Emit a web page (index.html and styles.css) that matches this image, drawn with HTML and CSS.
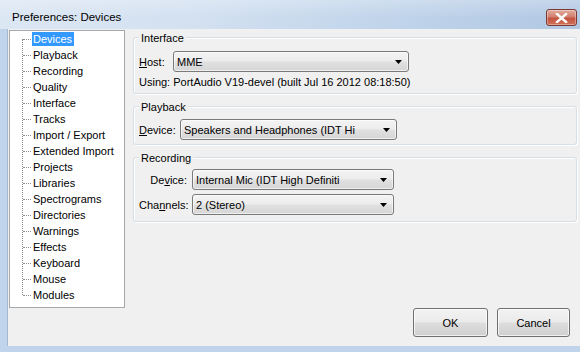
FILE: index.html
```html
<!DOCTYPE html>
<html>
<head>
<meta charset="utf-8">
<link rel="stylesheet" href="styles.css">
</head>
<body>
<div class="window">
  <div class="titlebar">
    <span class="title">Preferences: Devices</span>
    <button class="close" aria-label="Close">
      <svg width="13" height="10" viewBox="0 0 13 10"><path d="M2 1 L11 9 M11 1 L2 9" stroke="#fff" stroke-width="2.4" stroke-linecap="square"/></svg>
    </button>
  </div>
  <div class="client">
    <div class="main">
      <div class="tree">
        <ul class="tree-list">
          <li><span class="sel">Devices</span></li>
          <li><span>Playback</span></li>
          <li><span>Recording</span></li>
          <li><span>Quality</span></li>
          <li><span>Interface</span></li>
          <li><span>Tracks</span></li>
          <li><span>Import / Export</span></li>
          <li><span>Extended Import</span></li>
          <li><span>Projects</span></li>
          <li><span>Libraries</span></li>
          <li><span>Spectrograms</span></li>
          <li><span>Directories</span></li>
          <li><span>Warnings</span></li>
          <li><span>Effects</span></li>
          <li><span>Keyboard</span></li>
          <li><span>Mouse</span></li>
          <li><span>Modules</span></li>
        </ul>
      </div>
      <div class="groups">
        <div class="group g-interface">
          <div class="group-label">Interface</div>
          <div class="row">
            <span class="lbl lbl-host"><u>H</u>ost:</span>
            <div class="combo combo-host"><span>MME</span><svg class="arrow" width="7" height="4" viewBox="0 0 7 4"><polygon points="0,0 7,0 3.5,4" fill="#000"/></svg></div>
          </div>
          <div class="using">Using: PortAudio V19-devel (built Jul 16 2012 08:18:50)</div>
        </div>
        <div class="group g-playback">
          <div class="group-label">Playback</div>
          <div class="row">
            <span class="lbl lbl-pdev"><u>D</u>evice:</span>
            <div class="combo combo-pdev"><span>Speakers and Headphones (IDT Hi</span><svg class="arrow" width="7" height="4" viewBox="0 0 7 4"><polygon points="0,0 7,0 3.5,4" fill="#000"/></svg></div>
          </div>
        </div>
        <div class="group g-recording">
          <div class="group-label">Recording</div>
          <div class="row">
            <span class="lbl lbl-rec">De<u>v</u>ice:</span>
            <div class="combo combo-rec"><span>Internal Mic (IDT High Definiti</span><svg class="arrow" width="7" height="4" viewBox="0 0 7 4"><polygon points="0,0 7,0 3.5,4" fill="#000"/></svg></div>
          </div>
          <div class="row row-2">
            <span class="lbl lbl-rec">Cha<u>n</u>nels:</span>
            <div class="combo combo-rec"><span>2 (Stereo)</span><svg class="arrow" width="7" height="4" viewBox="0 0 7 4"><polygon points="0,0 7,0 3.5,4" fill="#000"/></svg></div>
          </div>
        </div>
      </div>
    </div>
    <div class="buttons">
      <button class="btn btn-ok">OK</button>
      <button class="btn btn-cancel">Cancel</button>
    </div>
  </div>
</div>
</body>
</html>
```
FILE: styles.css
```css
* { box-sizing: border-box; }
html, body { margin: 0; padding: 0; }
body {
  width: 580px;
  height: 352px;
  overflow: hidden;
  background: #c0d4eb;
  font-family: "Liberation Sans", Arial, sans-serif;
  font-size: 11px;
  color: #000;
}
.window {
  width: 580px;
  height: 352px;
  display: flex;
  flex-direction: column;
}
.titlebar {
  height: 29px;
  display: flex;
  align-items: flex-start;
  padding-left: 12px;
  background:
    linear-gradient(to bottom, rgba(255,255,255,0.25), rgba(255,255,255,0) 60%),
    linear-gradient(to right, #dce7f4 0%, #d2e0f0 35%, #bfd3ea 70%, #b1c8e3 100%);
}
.title {
  font-size: 11.5px;
  line-height: 14px;
  margin-top: 10px;
  color: #000;
}
.close {
  margin-left: auto;
  margin-right: 3px;
  margin-top: 9px;
  width: 31px;
  height: 17px;
  padding: 0;
  border: 1px solid #7a3a32;
  border-radius: 3px;
  background: linear-gradient(to bottom, #e2ab9e 0%, #d2806e 45%, #c45440 55%, #cf7158 100%);
  box-shadow: inset 0 0 0 1px rgba(255,255,255,0.35);
  display: flex;
  align-items: center;
  justify-content: center;
}
.client {
  flex: 1;
  margin-left: 7px;
  margin-bottom: 6px;
  border-left: 1px solid #a6b9cf;
  background: #f0f0f0;
  display: flex;
  flex-direction: column;
}
.main {
  display: flex;
  align-items: flex-start;
}
.tree {
  margin-left: 1px;
  margin-top: 1px;
  width: 116px;
  height: 278px;
  border: 1px solid #a4a9ae;
  background: #fff;
}
.tree-list {
  list-style: none;
  margin: 0 0 0 12px;
  padding: 0;
  position: relative;
}
.tree-list::before {
  content: "";
  position: absolute;
  left: 0;
  top: 8px;
  bottom: 8px;
  border-left: 1px dotted #8e8e8e;
}
.tree-list li {
  position: relative;
  height: 16px;
  padding-left: 10px;
  padding-top: 1px;
  line-height: 14px;
  white-space: nowrap;
}
.tree-list li::before {
  content: "";
  position: absolute;
  left: 1px;
  top: 8px;
  width: 8px;
  border-top: 1px dotted #8e8e8e;
}
.tree-list li span {
  display: inline-block;
  padding: 0 2px 0 1px;
  height: 14px;
}
.tree-list li .sel {
  background: #3399ff;
  color: #fff;
}
.groups {
  margin-left: 8px;
  margin-top: 8px;
  width: 444px;
  display: flex;
  flex-direction: column;
  gap: 12px;
}
.group {
  border: 1px solid #d5dfe5;
  border-radius: 3px;
  box-shadow: inset 1px 1px 0 #fff, 1px 1px 0 #fff;
  padding-left: 5px;
}
.group-label {
  margin-top: -7px;
  margin-left: 0;
  width: fit-content;
  padding: 0 2px;
  background: #f0f0f0;
  line-height: 14px;
  height: 14px;
}
.row {
  display: flex;
  align-items: center;
  height: 21px;
}
.lbl { line-height: 14px; white-space: nowrap; }
.lbl-host { width: 34px; }
.lbl-pdev { width: 41px; }
.lbl-rec { width: 49px; text-align: right; padding-right: 1px; margin-right: 4px; }
.combo {
  position: relative;
  height: 21px;
  border: 1px solid #7a7a7a;
  border-radius: 3px;
  background: linear-gradient(to bottom, #f4f4f4 0%, #ececec 48%, #e0e0e0 52%, #d6d6d6 100%);
  box-shadow: inset 0 0 0 1px rgba(255,255,255,0.6);
  display: flex;
  align-items: center;
  padding-left: 3px;
  line-height: 14px;
  white-space: nowrap;
}
.combo .arrow {
  position: absolute;
  right: 6px;
  top: 8px;
}
.combo-host { width: 236px; }
.combo-pdev { width: 217px; }
.combo-rec { width: 202px; }
.g-interface .row { margin-top: 6px; }
.using {
  margin-top: 3px;
  line-height: 14px;
  height: 14px;
  margin-bottom: 4px;
}
.g-playback .row { margin-top: 5px; margin-bottom: 4px; }
.g-recording .row { margin-top: 4px; }
.g-recording .row-2 { margin-top: 4px; margin-bottom: 6px; }
.buttons {
  margin-top: auto;
  display: flex;
  justify-content: flex-end;
  gap: 9px;
  padding: 0 10px 9px 0;
}
.btn {
  height: 29px;
  border: 1px solid #707070;
  border-radius: 3px;
  background: linear-gradient(to bottom, #f2f2f2 0%, #ebebeb 48%, #dddddd 52%, #cfcfcf 100%);
  box-shadow: inset 0 0 0 1px rgba(255,255,255,0.7);
  font-family: "Liberation Sans", Arial, sans-serif;
  font-size: 11px;
  color: #000;
  padding: 0;
}
.btn-ok { width: 75px; }
.btn-cancel { width: 73px; }
```
